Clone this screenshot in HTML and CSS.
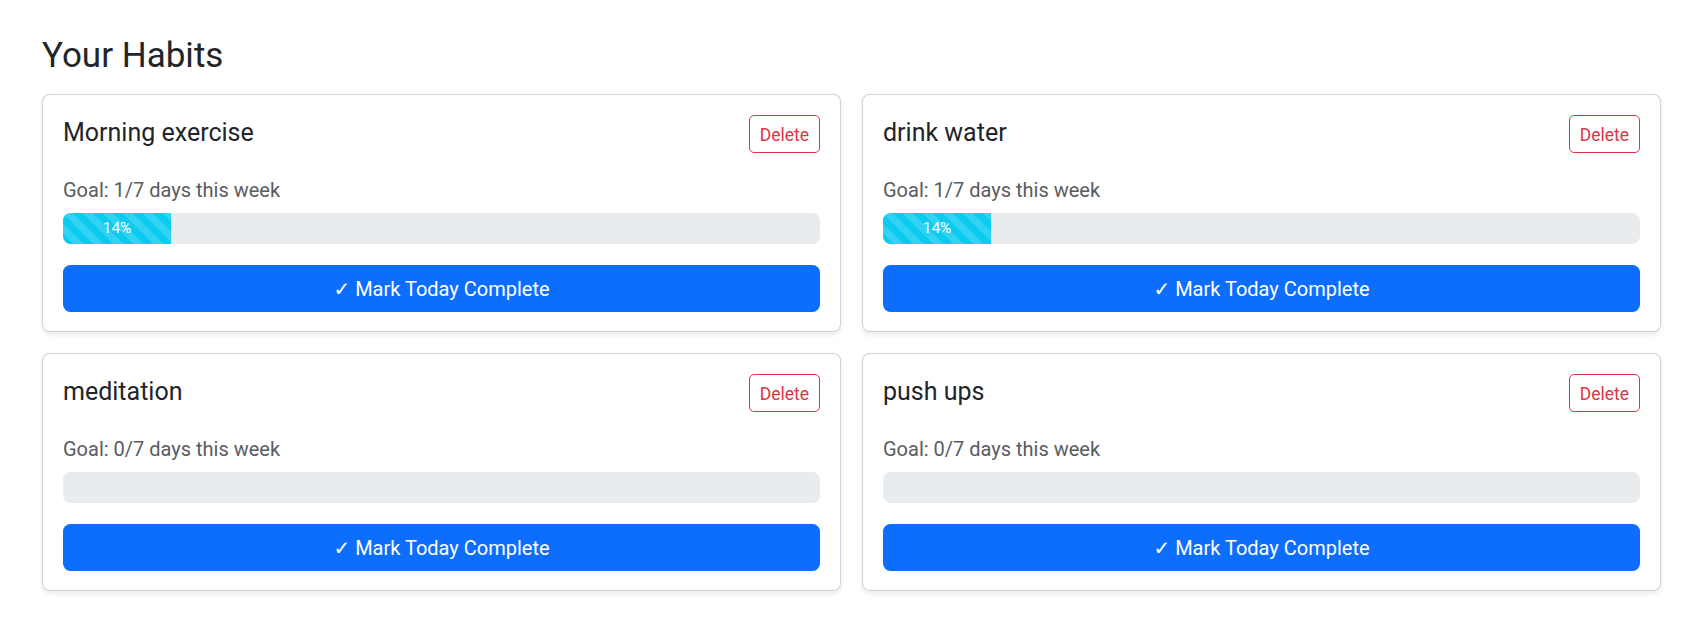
FILE: index.html
```html
<!DOCTYPE html>
<html lang="en">
<head>
<meta charset="utf-8">
<title>Your Habits</title>
<link rel="stylesheet" href="styles.css">
</head>
<body>
<main class="page">
  <h2 class="page-title">Your Habits</h2>
  <div class="habit-grid">
    <section class="habit-card">
      <div class="habit-head">
        <h3 class="habit-name">Morning exercise</h3>
        <button class="btn-delete">Delete</button>
      </div>
      <p class="habit-goal">Goal: 1/7 days this week</p>
      <div class="progress"><div class="progress-fill" style="width:14.2857%">14%</div></div>
      <button class="btn-complete">✓ Mark Today Complete</button>
    </section>
    <section class="habit-card">
      <div class="habit-head">
        <h3 class="habit-name">drink water</h3>
        <button class="btn-delete">Delete</button>
      </div>
      <p class="habit-goal">Goal: 1/7 days this week</p>
      <div class="progress"><div class="progress-fill" style="width:14.2857%">14%</div></div>
      <button class="btn-complete">✓ Mark Today Complete</button>
    </section>
    <section class="habit-card">
      <div class="habit-head">
        <h3 class="habit-name">meditation</h3>
        <button class="btn-delete">Delete</button>
      </div>
      <p class="habit-goal">Goal: 0/7 days this week</p>
      <div class="progress"></div>
      <button class="btn-complete">✓ Mark Today Complete</button>
    </section>
    <section class="habit-card">
      <div class="habit-head">
        <h3 class="habit-name">push ups</h3>
        <button class="btn-delete">Delete</button>
      </div>
      <p class="habit-goal">Goal: 0/7 days this week</p>
      <div class="progress"></div>
      <button class="btn-complete">✓ Mark Today Complete</button>
    </section>
  </div>
</main>
</body>
</html>
```

FILE: styles.css
```css
* { box-sizing: border-box; }

html, body {
  margin: 0;
  background: #fff;
}

body {
  font-family: Roboto, "Noto Sans", "DejaVu Sans", sans-serif;
  color: #212529;
  font-size: 20px;
}

.page {
  padding: 35px 32px 40px 42px;
}

.page-title {
  margin: 0 0 17px;
  font-size: 35px;
  font-weight: 400;
  line-height: 42px;
  color: #212529;
}

.habit-grid {
  display: grid;
  grid-template-columns: 1fr 1fr;
  gap: 21px;
}

.habit-card {
  border: 1px solid rgba(0, 0, 0, 0.175);
  border-radius: 7.5px;
  background: #fff;
  box-shadow: 0 2.5px 5px rgba(0, 0, 0, 0.075);
  padding: 20px 20px 19px;
}

.habit-head {
  display: flex;
  justify-content: space-between;
  align-items: flex-start;
  margin-bottom: 21px;
}

.habit-name {
  margin: 0;
  font-size: 25px;
  font-weight: 400;
  line-height: 35px;
}

.btn-delete {
  height: 38px;
  padding: 3px 10px 0;
  border: 1px solid #dc3545;
  border-radius: 5px;
  background: #fff;
  color: #dc3545;
  font-family: inherit;
  font-size: 17.5px;
  line-height: 1;
  display: flex;
  align-items: center;
  cursor: pointer;
}

.habit-goal {
  margin: 0 0 9px;
  padding-top: 2px;
  font-size: 20px;
  line-height: 28px;
  color: #595c5f;
}

.progress {
  height: 31px;
  margin-bottom: 21px;
  background: #e9ecef;
  border-radius: 7.5px;
  overflow: hidden;
  display: flex;
}

.progress-fill {
  height: 100%;
  background-color: #0dcaf0;
  background-image: linear-gradient(45deg,
    rgba(255, 255, 255, 0.15) 25%, transparent 25%,
    transparent 50%, rgba(255, 255, 255, 0.15) 50%,
    rgba(255, 255, 255, 0.15) 75%, transparent 75%, transparent);
  background-size: 20px 20px;
  color: #fff;
  font-size: 15.5px;
  line-height: 31px;
  text-align: center;
  white-space: nowrap;
}

.btn-complete {
  display: flex;
  justify-content: center;
  align-items: center;
  width: 100%;
  height: 47px;
  padding: 0 20px;
  border: 0;
  border-radius: 7.5px;
  background: #0d6efd;
  color: #fff;
  font-family: inherit;
  font-size: 20px;
  cursor: pointer;
}
```
